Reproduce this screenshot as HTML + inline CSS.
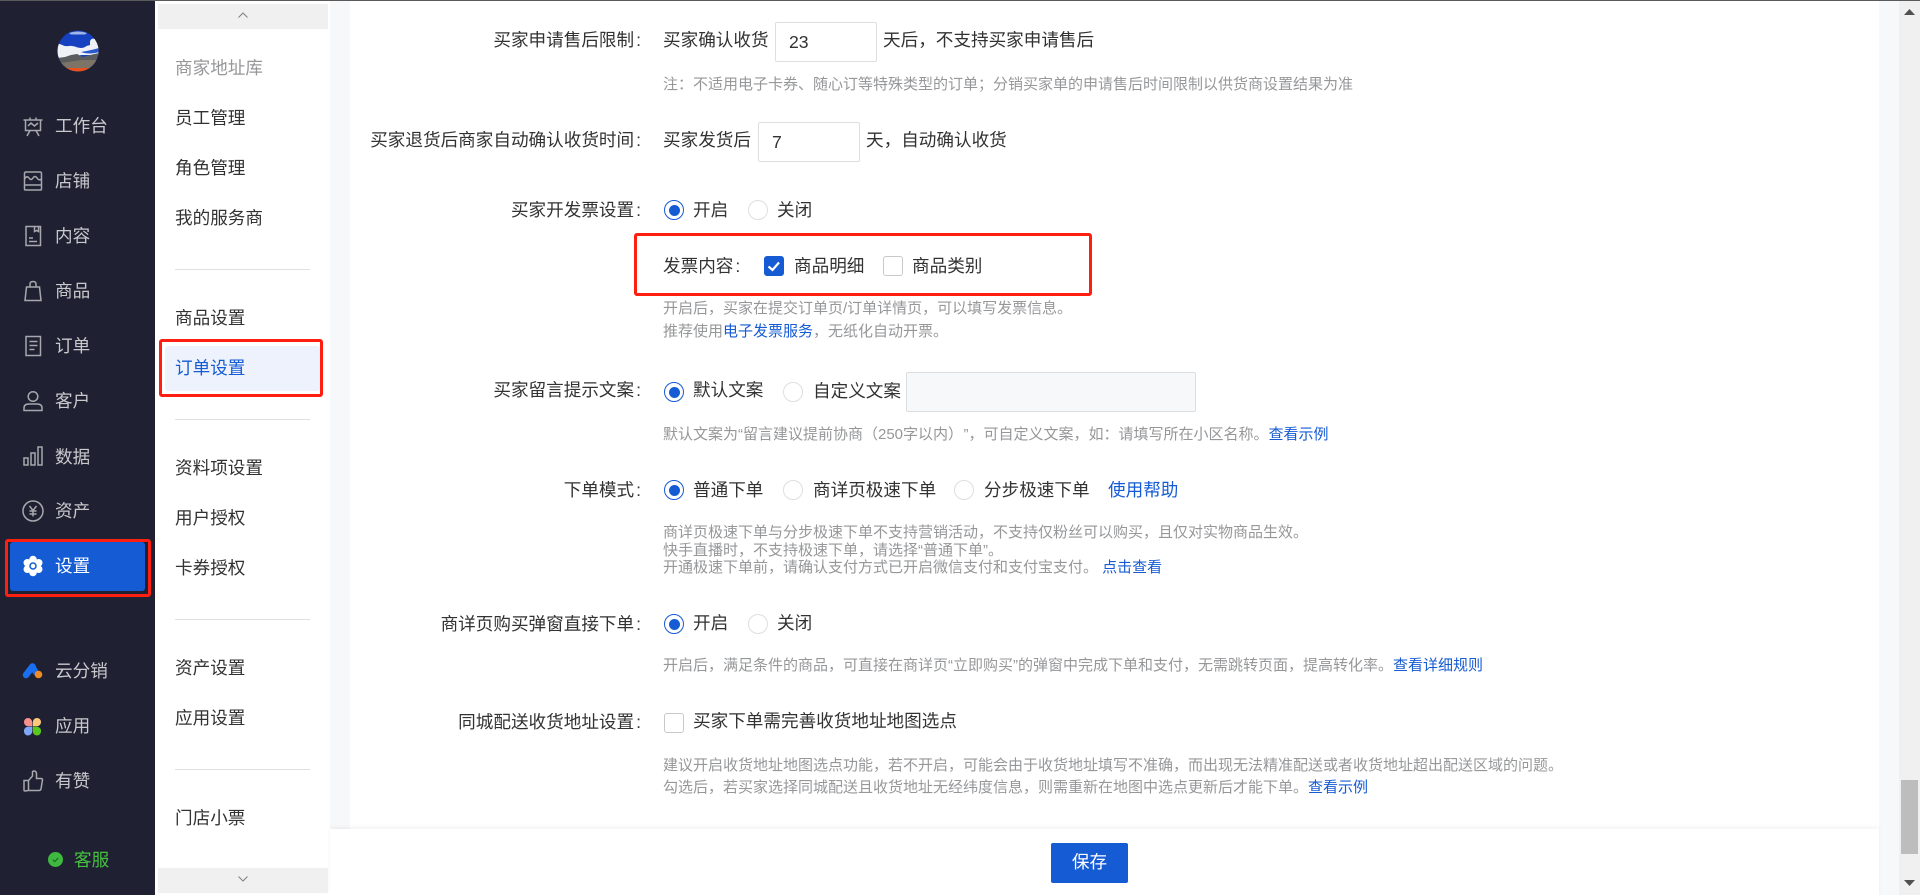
<!DOCTYPE html>
<html lang="zh-CN"><head><meta charset="utf-8"><title>订单设置</title>
<style>
html,body{margin:0;padding:0;width:1920px;height:895px;overflow:hidden;background:#f7f8fa}
body{position:relative;font-family:"Liberation Sans","Noto Sans CJK SC",sans-serif;font-size:17.6px;color:#323233}
div,span,a,svg{position:absolute;display:block}
.t{line-height:24px;height:24px;white-space:nowrap}
.l{left:300px;width:341px;text-align:right;line-height:24px;height:24px;white-space:nowrap}
.l i{font-style:normal;margin-left:2px}
.h{left:663px;margin-top:1px;font-size:15px;line-height:20px;height:20px;color:#969799;white-space:nowrap}
.h a,.h span{position:static;display:inline;color:#155bd4}
.s{left:55px;color:#c8c9cc;line-height:24px;height:24px;white-space:nowrap}
.n{left:175px;line-height:24px;height:24px;white-space:nowrap}
.d{left:175px;width:135px;height:1px;background:#e0e0e0}
.ip{background:#fff;border:1px solid #dcdee0;box-sizing:border-box;border-radius:2px;height:40px;width:102px;line-height:38px;padding-left:13px;color:#323233}
.r{width:20px;height:20px;box-sizing:border-box;border-radius:50%;border:1px solid #dcdee0;background:#fff}
.r.on{border-color:#155bd4}
.r.on:after{content:"";position:absolute;left:3.5px;top:3.5px;width:11px;height:11px;border-radius:50%;background:#155bd4}
.c{width:20px;height:20px;box-sizing:border-box;border-radius:3px;border:1px solid #c8c9cc;background:#fff}
.ic{left:22px;width:22px;height:22px;fill:none;stroke:#a6a8ad;stroke-width:1.5}
.red{border:3px solid #ff1f10;box-sizing:border-box;border-radius:3px}
</style></head><body>
<div style="left:330px;top:0;width:1569px;height:895px;background:#f7f8fa"></div>
<div style="left:350px;top:0;width:1529px;height:830px;background:#fff"></div>
<div style="left:1899px;top:0;width:21px;height:895px;background:#f0f0f0"></div>
<div style="left:1901px;top:780px;width:17px;height:74px;background:#bdbdbd"></div>
<svg style="left:1904px;top:9px;width:11px;height:6px"><path d="M0 6L5.500 0L11 6Z" fill="#505050"/></svg>
<svg style="left:1904px;top:880px;width:11px;height:6px"><path d="M0 0L5.500 6L11 0Z" fill="#505050"/></svg>

<!-- sidebar -->
<div style="left:0;top:0;width:155px;height:895px;background:#1f2133"></div>
<svg style="left:57px;top:30px;width:42px;height:42px" viewBox="0 0 42 42">
<defs><clipPath id="av"><circle cx="21" cy="21" r="20.500"/></clipPath></defs>
<g clip-path="url(#av)"><rect width="42" height="42" fill="#1540c0"/><path d="M12 3C18 1 24 1 30 3L28 4.500L14 4.500Z" fill="#9fb4e8"/><path d="M0 14C4 13 6 17 12 16C18 15 22 20 28 17C32 14 36 16 42 14V25H24L14 28H0Z" fill="#eef1f5"/><path d="M33 12c0-3 3-4 5-3l4 4v5h-9z" fill="#eef1f5"/><path d="M24 22c5-1 12-2 18-4v4c-6 2-13 2-18 0z" fill="#2a58d0"/><path d="M0 28L8 27L14 25L20 24L26 27L33 25L42 23V42H0Z" fill="#5a5c60"/><path d="M4 33L24 30L40 30V38H4Z" fill="#7c7466"/><rect x="8" y="38" width="26" height="4" fill="#e8501e"/></g></svg>

<svg class="ic" style="top:115px" viewBox="0 0 22 22"><path d="M1.500 5H20.500M3.500 5V15.500H18.500V5M8 2.500V5M14 2.500V5M6 11L9 8L12.500 11L16 8M8 15.500L5 21M14 15.500L17 21"/></svg>
<div class="s" style="top:114px">工作台</div>
<svg class="ic" style="top:170px" viewBox="0 0 22 22"><path d="M2.500 9V3.500Q2.500 2 4 2H18Q19.500 2 19.500 3.500V19Q19.500 20 18.500 20H3.500Q2.500 20 2.500 19V9ZM2.500 15H19.500M2.500 9Q5 5 7 8Q9 11 11 8Q13 5 15 8Q17 11 19.500 9"/></svg>
<div class="s" style="top:169px">店铺</div>
<svg class="ic" style="top:225px" viewBox="0 0 22 22"><path d="M4 1.500H18.500V20.500H4ZM12.500 1.500V6.500L14.500 5.500L16.500 6.500V1.500M7 13H11M7 16.500H15"/></svg>
<div class="s" style="top:224px">内容</div>
<svg class="ic" style="top:280px" viewBox="0 0 22 22"><path d="M4.500 7H17.500L19 20.500H3ZM8 7V4Q8 1.500 11 1.500Q14 1.500 14 4V7"/></svg>
<div class="s" style="top:279px">商品</div>
<svg class="ic" style="top:335px" viewBox="0 0 22 22"><path d="M4 1.500H18.500V20.500H4ZM7.500 6.500H15.500M7.500 10.500H15.500M7.500 14.500H12.500"/></svg>
<div class="s" style="top:334px">订单</div>
<svg class="ic" style="top:390px" viewBox="0 0 22 22"><circle cx="11" cy="6.500" r="4.800"/><path d="M2 20.500V18Q2 14 7 14H15Q20 14 20 18V20.500Z"/></svg>
<div class="s" style="top:389px">客户</div>
<svg class="ic" style="top:445px" viewBox="0 0 22 22"><rect x="2" y="13" width="4" height="7"/><rect x="9" y="8" width="4" height="12"/><rect x="16" y="2" width="4" height="18"/></svg>
<div class="s" style="top:445px">数据</div>
<svg class="ic" style="top:500px" viewBox="0 0 22 22"><circle cx="11" cy="11" r="10"/><path d="M7.500 6L11 10.500L14.500 6M11 10.500V16.500M7.500 11H14.500M7.500 14H14.500"/></svg>
<div class="s" style="top:499px">资产</div>

<div style="left:10px;top:542px;width:135px;height:49px;background:#155bd4;border-radius:3px"></div>
<div class="red" style="left:5px;top:539px;width:146px;height:58px"></div>
<svg style="left:22px;top:555px;width:22px;height:22px" viewBox="0 0 22 22"><g fill="#fff"><circle cx="11" cy="11" r="7.500"/><circle cx="11" cy="4.500" r="3.800"/><circle cx="11" cy="17.500" r="3.800"/><circle cx="5.300" cy="7.800" r="3.800"/><circle cx="16.700" cy="7.800" r="3.800"/><circle cx="5.300" cy="14.200" r="3.800"/><circle cx="16.700" cy="14.200" r="3.800"/></g><circle cx="11" cy="11" r="3" fill="none" stroke="#155bd4" stroke-width="1.500"/></svg>
<div class="s" style="top:554px;color:#fff">设置</div>

<svg style="left:22px;top:661px;width:22px;height:20px" viewBox="0 0 22 20"><path d="M4 14L10.500 5.500" stroke="#1a6ff0" stroke-width="6.500" stroke-linecap="round"/><path d="M10.500 5.500L13.500 11" stroke="#1a6ff0" stroke-width="6" stroke-linecap="round"/><circle cx="16.500" cy="13.500" r="3.800" fill="#f08a24"/></svg>
<div class="s" style="top:659px">云分销</div>
<svg style="left:23px;top:717px;width:19px;height:19px" viewBox="0 0 19 19"><path d="M1 5A4 4 0 0 1 5 1A4.200 4.200 0 0 1 9.200 5.200V9.200H5A4 4 0 0 1 1 5Z" fill="#f8918c"/><path d="M18 5A4 4 0 0 0 14 1A4.200 4.200 0 0 0 9.800 5.200V9.200H14A4 4 0 0 0 18 5Z" fill="#fcc87c"/><path d="M1 14.500A4 4 0 0 0 5 18.500A4.200 4.200 0 0 0 9.200 14.300V9.800H5A4 4 0 0 0 1 14.500Z" fill="#7fa8f8"/><path d="M18 14.500A4 4 0 0 1 14 18.500A4.200 4.200 0 0 1 9.800 14.300V9.800H14A4 4 0 0 1 18 14.500Z" fill="#58c81e"/></svg>
<div class="s" style="top:714px">应用</div>
<svg class="ic" style="top:770px" viewBox="0 0 22 22"><path d="M2 10.500H6.500V20.500L3 21Q2 21 2 20ZM6.500 10.500L10.500 6V2Q10.500 1 12 1Q14.500 1 14.500 4V8.500H19Q20.500 8.500 20.500 10L19 19Q18.500 20.500 17 20.500H6.500"/></svg>
<div class="s" style="top:769px">有赞</div>
<svg style="left:48px;top:852px;width:15px;height:15px" viewBox="0 0 15 15"><circle cx="7.500" cy="7.500" r="7.500" fill="#3eb83e"/><path d="M4.800 7.600L6.800 9.600L10.300 5.900" fill="none" stroke="#1f5f28" stroke-width="1"/></svg>
<div class="s" style="left:74px;top:848px;color:#45c13f">客服</div>

<!-- sub nav -->
<div style="left:155px;top:0;width:175px;height:895px;background:#fff"></div>
<div style="left:158px;top:4px;width:170px;height:25px;background:#f0f0f0"></div>
<svg style="left:237px;top:11px;width:12px;height:8px"><path d="M1.500 6.500L6 2L10.500 6.500" fill="none" stroke="#808080" stroke-width="1"/></svg>
<div style="left:158px;top:868px;width:170px;height:25px;background:#f0f0f0"></div>
<svg style="left:237px;top:875px;width:12px;height:8px"><path d="M1.500 1.500L6 6L10.500 1.500" fill="none" stroke="#808080" stroke-width="1"/></svg>
<div class="n" style="top:56px;color:#969799">商家地址库</div>
<div class="n" style="top:106px">员工管理</div>
<div class="n" style="top:156px">角色管理</div>
<div class="n" style="top:206px">我的服务商</div>
<div class="d" style="top:269px"></div>
<div class="n" style="top:306px">商品设置</div>
<div style="left:165px;top:346px;width:155px;height:45px;background:#edf2fc;border-radius:3px"></div>
<div class="red" style="left:159px;top:339px;width:164px;height:58px"></div>
<div class="n" style="top:356px;color:#155bd4">订单设置</div>
<div class="d" style="top:419px"></div>
<div class="n" style="top:456px">资料项设置</div>
<div class="n" style="top:506px">用户授权</div>
<div class="n" style="top:556px">卡券授权</div>
<div class="d" style="top:619px"></div>
<div class="n" style="top:656px">资产设置</div>
<div class="n" style="top:706px">应用设置</div>
<div class="d" style="top:769px"></div>
<div class="n" style="top:806px">门店小票</div>

<!-- row 1 -->
<div class="l" style="top:28px">买家申请售后限制<i>:</i></div>
<div class="t" style="left:663px;top:28px">买家确认收货</div>
<div class="ip" style="left:775px;top:22px">23</div>
<div class="t" style="left:883px;top:28px">天后&#xFF0C;不支持买家申请售后</div>
<div class="h" style="top:74px">注&#xFF1A;不适用电子卡券、随心订等特殊类型的订单&#xFF1B;分销买家单的申请售后时间限制以供货商设置结果为准</div>

<!-- row 2 -->
<div class="l" style="top:128px">买家退货后商家自动确认收货时间<i>:</i></div>
<div class="t" style="left:663px;top:128px">买家发货后</div>
<div class="ip" style="left:758px;top:122px">7</div>
<div class="t" style="left:866px;top:128px">天&#xFF0C;自动确认收货</div>

<!-- row 3 -->
<div class="l" style="top:198px">买家开发票设置<i>:</i></div>
<div class="r on" style="left:664px;top:200px"></div><div class="t" style="left:693px;top:198px">开启</div>
<div class="r" style="left:748px;top:200px"></div><div class="t" style="left:777px;top:198px">关闭</div>
<div class="red" style="left:634px;top:233px;width:458px;height:63px"></div>
<div class="t" style="left:663px;top:254px">发票内容<span style="position:static;display:inline;margin-left:2px">:</span></div>
<div class="c" style="left:764px;top:256px;background:#155bd4;border-color:#155bd4"></div>
<svg style="left:764px;top:256px;width:20px;height:20px"><path d="M4.500 10.500L8.500 14L15 6.500" fill="none" stroke="#fff" stroke-width="2.200"/></svg>
<div class="t" style="left:794px;top:254px">商品明细</div>
<div class="c" style="left:883px;top:256px"></div>
<div class="t" style="left:912px;top:254px">商品类别</div>
<div class="h" style="top:298px">开启后&#xFF0C;买家在提交订单页/订单详情页&#xFF0C;可以填写发票信息。</div>
<div class="h" style="top:321px">推荐使用<a>电子发票服务</a>&#xFF0C;无纸化自动开票。</div>

<!-- row 4 -->
<div class="l" style="top:378px">买家留言提示文案<i>:</i></div>
<div class="r on" style="left:664px;top:382px"></div><div class="t" style="left:693px;top:378px">默认文案</div>
<div class="r" style="left:783px;top:382px"></div><div class="t" style="left:813px;top:379px">自定义文案</div>
<div style="left:906px;top:372px;width:290px;height:40px;box-sizing:border-box;background:#f7f8fa;border:1px solid #dcdee0;border-radius:2px"></div>
<div class="h" style="top:424px">默认文案为“留言建议提前协商&#xFF08;250字以内&#xFF09;<span style="color:#969799;margin-left:8px">”</span>&#xFF0C;可自定义文案&#xFF0C;如&#xFF1A;请填写所在小区名称。<a>查看示例</a></div>

<!-- row 5 -->
<div class="l" style="top:478px">下单模式<i>:</i></div>
<div class="r on" style="left:664px;top:480px"></div><div class="t" style="left:693px;top:478px">普通下单</div>
<div class="r" style="left:783px;top:480px"></div><div class="t" style="left:813px;top:478px">商详页极速下单</div>
<div class="r" style="left:954px;top:480px"></div><div class="t" style="left:984px;top:478px">分步极速下单</div>
<div class="t" style="left:1108px;top:478px;color:#155bd4">使用帮助</div>
<div class="h" style="top:522px">商详页极速下单与分步极速下单不支持营销活动&#xFF0C;不支持仅粉丝可以购买&#xFF0C;且仅对实物商品生效。</div>
<div class="h" style="top:540px">快手直播时&#xFF0C;不支持极速下单&#xFF0C;请选择“普通下单”。</div>
<div class="h" style="top:557px">开通极速下单前&#xFF0C;请确认支付方式已开启微信支付和支付宝支付。 <a>点击查看</a></div>

<!-- row 6 -->
<div class="l" style="top:612px">商详页购买弹窗直接下单<i>:</i></div>
<div class="r on" style="left:664px;top:614px"></div><div class="t" style="left:693px;top:611px">开启</div>
<div class="r" style="left:748px;top:614px"></div><div class="t" style="left:777px;top:611px">关闭</div>
<div class="h" style="top:655px">开启后&#xFF0C;满足条件的商品&#xFF0C;可直接在商详页“立即购买”的弹窗中完成下单和支付&#xFF0C;无需跳转页面&#xFF0C;提高转化率。<a>查看详细规则</a></div>

<!-- row 7 -->
<div class="l" style="top:710px">同城配送收货地址设置<i>:</i></div>
<div class="c" style="left:664px;top:713px"></div><div class="t" style="left:693px;top:709px">买家下单需完善收货地址地图选点</div>
<div class="h" style="top:755px">建议开启收货地址地图选点功能&#xFF0C;若不开启&#xFF0C;可能会由于收货地址填写不准确&#xFF0C;而出现无法精准配送或者收货地址超出配送区域的问题。</div>
<div class="h" style="top:777px">勾选后&#xFF0C;若买家选择同城配送且收货地址无经纬度信息&#xFF0C;则需重新在地图中选点更新后才能下单。<a>查看示例</a></div>

<!-- footer -->
<div style="left:330px;top:829px;width:1549px;height:66px;background:#fff;box-shadow:0 -2px 4px rgba(0,0,0,.05)"></div>
<div style="left:1051px;top:843px;width:77px;height:40px;background:#155bd4;border-radius:2px;color:#fff;text-align:center;line-height:38px">保存</div>
<div style="left:0;top:0;width:1920px;height:1px;background:#5a5a5a"></div>
</body></html>
